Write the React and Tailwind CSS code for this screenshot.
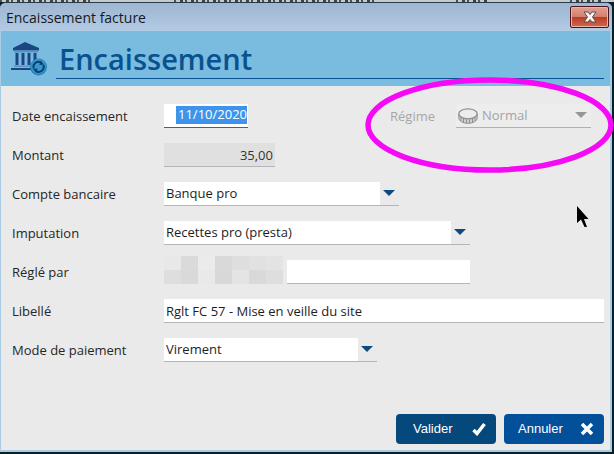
import React from "react";

const LABEL = "w-[152px] shrink-0 text-[13px] leading-6 text-[#262626]";
const FIELD =
  "h-6 border-b border-[#b5b5b8] bg-white px-[2px] text-[13px] text-[#1d1d1f] outline-none";
const TICKS =
  "h-[2px] bg-[repeating-linear-gradient(90deg,#4a5050_0_2px,#c5cbcb_2px_6px,#3c4242_6px_9px,#c5cbcb_9px_11px)]";

function Row({ id, label, children }) {
  return (
    <div className="flex h-6 items-center">
      <label htmlFor={id} className={LABEL}>
        {label}
      </label>
      {children}
    </div>
  );
}

function Arrow({ className }) {
  return (
    <svg viewBox="0 0 12 6" className={"h-[6px] w-3 " + className} aria-hidden="true">
      <path d="M0 0H12L6 6Z" fill="currentColor" />
    </svg>
  );
}

function Dropdown({ id, value, width }) {
  return (
    <div className={"relative h-6 border-b border-[#b5b5b8] pr-[19px] " + width}>
      <select
        id={id}
        defaultValue={value}
        className="block h-[23px] w-full appearance-none bg-white px-[2px] text-[13px] text-[#1d1d1f] outline-none"
      >
        <option>{value}</option>
      </select>
      <Arrow className="pointer-events-none absolute right-1 top-[8px] text-[#0c4a80]" />
    </div>
  );
}

function BankIcon() {
  return (
    <svg viewBox="0 0 38 36" className="h-9 w-[38px] shrink-0" aria-hidden="true">
      <g fill="#1d4584">
        <path d="M16 1 30 7V9.500H4V7Z" />
        <rect x="5" y="9.500" width="24" height="2" fill="#5b93c0" />
        <rect x="6.500" y="12" width="3" height="12" />
        <rect x="12.500" y="12" width="3" height="12" />
        <rect x="18.500" y="12" width="3" height="12" />
        <rect x="24.500" y="12" width="3" height="12" />
        <rect x="5" y="24.500" width="24" height="1.500" fill="#5b93c0" />
        <rect x="2" y="27" width="28" height="2" />
      </g>
      <circle cx="29.500" cy="26" r="8.500" fill="#1f83bd" />
      <circle cx="29.500" cy="25.500" r="7.500" fill="#3499cf" />
      <g fill="none" stroke="#123a6b" strokeWidth="2">
        <path d="M24.800 27.500A5 5 0 0 1 32.500 21.800" />
        <path d="M34.300 24A5 5 0 0 1 26.800 30" />
      </g>
      <path d="M31.500 19.500 35 23.500 30.500 24ZM27.500 32 24 28 28.500 27.500Z" fill="#123a6b" />
    </svg>
  );
}

function CoinIcon() {
  return (
    <svg viewBox="0 0 20 16" className="h-4 w-5 shrink-0" fill="none" stroke="#8f8f8f" aria-hidden="true">
      <path d="M.8 6V10C.8 13 5 15.300 10 15.300S19.200 13 19.200 10V6" fill="#d2d2d2" />
      <ellipse cx="10" cy="5.800" rx="9.200" ry="5" fill="#ececec" strokeWidth="1.300" />
      <path d="M3 9.500V13M5.500 11V14.500M8.500 11.500V15M11.500 11.500V15M14.500 11V14.500M17 9.500V13" />
    </svg>
  );
}

function Mosaic() {
  return (
    <div className="grid h-7 w-[119px] shrink-0 grid-cols-7 grid-rows-2" aria-hidden="true">
      <i className="bg-[#e9e8e9]" />
      <i className="bg-[#dadadb]" />
      <i className="bg-[#ebebec]" />
      <i className="bg-[#d9d9da]" />
      <i className="bg-[#dededf]" />
      <i className="bg-[#e1e1e2]" />
      <i className="bg-[#e3e3e4]" />
      <i className="bg-[#dededf]" />
      <i className="bg-[#d9d9da]" />
      <i className="bg-[#e9e9ea]" />
      <i className="bg-[#d8d8d9]" />
      <i className="bg-[#e4e4e5]" />
      <i className="bg-[#d9d9da]" />
      <i className="bg-[#dedede]" />
    </div>
  );
}

export default function App() {
  return (
    <div className="relative flex min-h-screen flex-col bg-[#071f29] font-['Open_Sans','Noto_Sans',sans-serif]">
      <div className="flex justify-between bg-[#c5cbcb] pr-3">
        <div className={TICKS + " w-[92px]"} />
        <div className={TICKS + " w-[200px]"} />
        <div className={TICKS + " w-[32px]"} />
        <div className={TICKS + " w-[32px]"} />
      </div>
      <div className="mb-[2px] mr-[2px] flex grow flex-col rounded-t-md border-t border-[#283c4c] bg-[#a9cce4]">
        <header className="flex h-7 items-center justify-between rounded-t-md bg-gradient-to-b from-[#9fb6d1] to-[#b2cae4] pl-[6px] pr-[3px]">
          <span className="text-[14px] text-[#15191f]">Encaissement facture</span>
          <button
            type="button"
            aria-label="Fermer"
            className="flex h-[22px] w-[39px] items-center justify-center rounded-[2px] border border-[#4b1519] bg-[linear-gradient(#e0a093_0%,#d4806f_48%,#bb3a22_50%,#cf6a50_100%)] shadow-[inset_0_0_0_1px_#e8b5aa]"
          >
            <svg viewBox="0 0 14 12" className="h-3 w-[14px]" aria-hidden="true">
              <path
                d="M1 1H5L7 3.500 9 1H13L9.500 6 13 11H9L7 8.500 5 11H1L4.500 6Z"
                fill="#f7f7f7"
                stroke="#5f4a50"
                strokeWidth="1"
              />
            </svg>
          </button>
        </header>
        <main className="mb-[2px] ml-px mr-[2px] flex grow flex-col bg-[#ebeaeb]">
          <div className="flex h-[55px] items-center bg-[#79bce0] pl-2 pr-[6px]">
            <BankIcon />
            <h1 className="ml-[9px] h-10 grow border-b border-[#08528f] pl-[3px] text-[29px] leading-10 font-semibold text-[#08528f]">
              Encaissement
            </h1>
          </div>
          <form className="flex grow flex-col pb-[6px] pl-[11px] pr-[6px] pt-[18px]" onSubmit={(e) => e.preventDefault()}>
            <div className="flex flex-col gap-[15px]">
              <div className="flex justify-between">
                <Row id="date" label="Date encaissement">
                  <div className="flex h-6 w-[84px] justify-end border-b border-[#1c7a6c] bg-white pb-[3px] pr-px pt-[2px]">
                    <input
                      id="date"
                      defaultValue="11/10/2020"
                      className="w-[71px] bg-[#3d94ea] text-right text-[13px] text-white outline-none"
                    />
                  </div>
                </Row>
                <div className="mr-[13px] flex h-6 items-center">
                  <label htmlFor="regime" className="w-[66px] text-[13px] leading-6 text-[#a6a6a6]">
                    Régime
                  </label>
                  <div className="relative flex h-6 w-[135px] items-center border-b border-[#b0b0b3] bg-[#eeedee] pl-[2px]">
                    <CoinIcon />
                    <select
                      id="regime"
                      disabled
                      className="grow appearance-none pl-1 text-[13px] text-[#a3a3a3] opacity-100 outline-none"
                    >
                      <option>Normal</option>
                    </select>
                    <Arrow className="pointer-events-none absolute right-1 top-[8px] text-[#969696]" />
                  </div>
                </div>
              </div>
              <Row id="montant" label="Montant">
                <input
                  id="montant"
                  readOnly
                  defaultValue="35,00"
                  className="h-6 w-[111px] border-b border-[#b5b5b8] bg-[#e0e0e0] px-[2px] text-right text-[13px] text-[#333] outline-none"
                />
              </Row>
              <Row id="compte" label="Compte bancaire">
                <Dropdown id="compte" value="Banque pro" width="w-[235px]" />
              </Row>
              <Row id="imputation" label="Imputation">
                <Dropdown id="imputation" value="Recettes pro (presta)" width="w-[306px]" />
              </Row>
              <Row id="regle" label="Réglé par">
                <div className="flex h-6 w-[306px] items-end">
                  <Mosaic />
                  <input id="regle" className={FIELD + " ml-1 min-w-0 grow"} />
                </div>
              </Row>
              <Row id="libelle" label="Libellé">
                <input
                  id="libelle"
                  defaultValue="Rglt FC 57 - Mise en veille du site"
                  className={FIELD + " min-w-0 grow"}
                />
              </Row>
              <Row id="mode" label="Mode de paiement">
                <Dropdown id="mode" value="Virement" width="w-[213px]" />
              </Row>
            </div>
            <div className="mt-auto flex justify-end gap-2 font-['Liberation_Sans',sans-serif] text-[13px] text-white">
              <button
                type="button"
                className="flex h-[30px] w-[100px] items-center justify-between rounded bg-[#04487c] pl-[17px] pr-[10px]"
              >
                Valider
                <svg viewBox="0 0 14 14" className="h-[14px] w-[14px]" aria-hidden="true">
                  <path d="M1.500 8 5 11.500 12.500 2" fill="none" stroke="#fff" strokeWidth="3.500" />
                </svg>
              </button>
              <button
                type="button"
                className="flex h-[30px] w-[100px] items-center justify-between rounded bg-[#03509a] pl-[14px] pr-[10px]"
              >
                Annuler
                <svg viewBox="0 0 14 14" className="h-[14px] w-[14px]" aria-hidden="true">
                  <path d="M2 2 12 12M12 2 2 12" fill="none" stroke="#fff" strokeWidth="3.500" />
                </svg>
              </button>
            </div>
          </form>
        </main>
      </div>
      <svg
        viewBox="0 0 250 96"
        className="pointer-events-none absolute right-0 top-[77px] h-24 w-[250px]"
        aria-hidden="true"
      >
        <ellipse cx="125.500" cy="48" rx="121.500" ry="45" fill="none" stroke="#f50af5" strokeWidth="5.500" />
      </svg>
      <svg
        viewBox="0 0 13 23"
        className="pointer-events-none absolute right-[25px] top-[205px] h-[23px] w-[13px]"
        aria-hidden="true"
      >
        <path d="M1 1V18L5 14.500 8.500 22H11L8 14H12.500Z" fill="#000" />
      </svg>
    </div>
  );
}
